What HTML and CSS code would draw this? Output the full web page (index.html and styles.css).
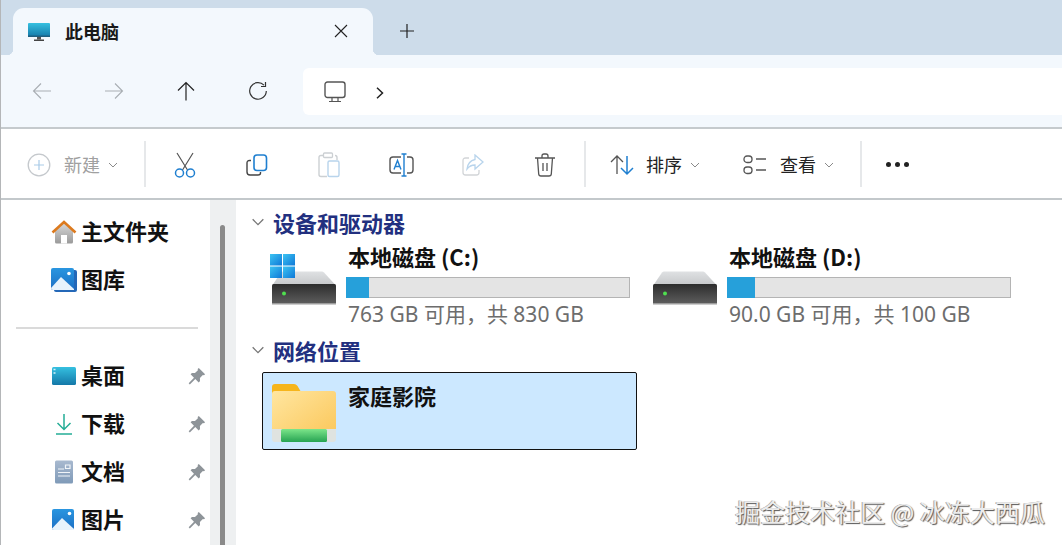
FILE: index.html
```html
<!DOCTYPE html>
<html lang="zh-CN">
<head>
<meta charset="utf-8">
<title>此电脑</title>
<link rel="stylesheet" href="styles.css">
</head>
<body>
<svg class="defs" width="0" height="0" aria-hidden="true">
  <defs>
    <linearGradient id="gMon" x1="0" y1="0" x2="0" y2="1"><stop offset="0" stop-color="#35c0e0"/><stop offset="1" stop-color="#1478a8"/></linearGradient>
    <linearGradient id="gPic" x1="0" y1="0" x2="0" y2="1"><stop offset="0" stop-color="#2a96e0"/><stop offset="1" stop-color="#1c6fc4"/></linearGradient>
    <linearGradient id="gHouse" x1="0" y1="0" x2="0" y2="1"><stop offset="0" stop-color="#d8d8d8"/><stop offset="1" stop-color="#9a9a9a"/></linearGradient>
    <linearGradient id="gDoc" x1="0" y1="0" x2="0" y2="1"><stop offset="0" stop-color="#a8b9cf"/><stop offset="1" stop-color="#7f9ab8"/></linearGradient>
    <linearGradient id="gDrive" x1="0" y1="0" x2="0" y2="1"><stop offset="0" stop-color="#2c2c2c"/><stop offset="1" stop-color="#5e5e5e"/></linearGradient>
    <linearGradient id="gDriveTop" x1="0" y1="0" x2="0" y2="1"><stop offset="0" stop-color="#dfe1e3"/><stop offset="1" stop-color="#c6c8ca"/></linearGradient>
    <linearGradient id="gFolder" x1="0" y1="0" x2="1" y2="1"><stop offset="0" stop-color="#ffe6a0"/><stop offset="1" stop-color="#fbc658"/></linearGradient>
    <linearGradient id="gGreen" x1="0" y1="0" x2="0" y2="1"><stop offset="0" stop-color="#7ce58a"/><stop offset="1" stop-color="#26a352"/></linearGradient>
    <linearGradient id="gWin" x1="0" y1="0" x2="1" y2="1"><stop offset="0" stop-color="#3cc4f2"/><stop offset="1" stop-color="#0f78d8"/></linearGradient>
    <symbol id="chev" viewBox="0 0 10 6"><path d="M1 1l4 4 4-4" fill="none" stroke="currentColor" stroke-width="1"/></symbol>
    <symbol id="pin" viewBox="0 0 16 16"><path d="M9.600 .8l5.600 5.600-1 1-1-.2-2.600 2.600.1 2.700-1.200 1.200-3-3L1.600 15.500l-1-1 4.700-5-3-3 1.200-1.200 2.700.1L8.800 2.800l-.2-1z" fill="#8e9499"/></symbol>
    <symbol id="drive" viewBox="0 0 64 34">
      <path d="M11 .5h39q1 0 2 1l11.500 12.500H.5L9 1.500q1-1 2-1z" fill="url(#gDriveTop)"/>
      <rect x="0" y="13" width="64" height="20" rx="1.500" fill="url(#gDrive)"/>
      <rect x="0" y="32" width="64" height="1.500" fill="#9c9c9c"/>
      <circle cx="12" cy="22.500" r="2" fill="#4fe04f"/>
    </symbol>
  </defs>
</svg>

<div class="window">
  <header class="tabstrip">
    <div class="tab">
      <svg class="tab-icon" width="24" height="20" viewBox="0 0 24 20"><rect x="1" y="1" width="22" height="14" rx="1" fill="url(#gMon)"/><rect x="1" y="13.500" width="22" height="1.500" fill="#1f5f80"/><rect x="10" y="15" width="4" height="2.500" fill="#555"/><rect x="7" y="17.500" width="10" height="1.500" fill="#444"/></svg>
      <span class="tab-title">此电脑</span>
      <svg class="tab-close" width="14" height="14" viewBox="0 0 14 14"><path d="M1 1l12 12M13 1L1 13" stroke="#222" stroke-width="1.100" fill="none"/></svg>
    </div>
    <svg class="tab-add" width="16" height="16" viewBox="0 0 16 16"><path d="M8 1v14M1 8h14" stroke="#222" stroke-width="1.200" fill="none"/></svg>
  </header>

  <nav class="navbar">
    <button class="nav-btn"><svg width="20" height="18" viewBox="0 0 20 18"><path d="M19 9H1.500M9 1.500L1.500 9 9 16.500" fill="none" stroke="#a9aeb3" stroke-width="1.100"/></svg></button>
    <button class="nav-btn"><svg width="20" height="18" viewBox="0 0 20 18"><path d="M1 9h17.500M11 1.500L18.500 9 11 16.500" fill="none" stroke="#a9aeb3" stroke-width="1.100"/></svg></button>
    <button class="nav-btn"><svg width="18" height="20" viewBox="0 0 18 20"><path d="M9 19.500V1.500M1 9.500l8-8 8 8" fill="none" stroke="#222" stroke-width="1.200"/></svg></button>
    <button class="nav-btn"><svg width="20" height="20" viewBox="0 0 20 20"><path d="M16 4.200A8.300 8.300 0 1 0 18.300 10" fill="none" stroke="#333" stroke-width="1.200"/><path d="M17.500 1v4.500H13" fill="none" stroke="#333" stroke-width="1.200"/></svg></button>
    <div class="address">
      <svg width="22" height="22" viewBox="0 0 22 22"><rect x="1" y="1" width="20" height="15.500" rx="2.500" fill="none" stroke="#555" stroke-width="1.400"/><path d="M8 16.500v3.500M14 16.500v3.500M5 20.500h12" stroke="#555" stroke-width="1.200" fill="none"/></svg>
      <svg class="addr-chev" width="8" height="12" viewBox="0 0 8 12"><path d="M1 .8L6.500 6 1 11.200" fill="none" stroke="#222" stroke-width="1.500"/></svg>
    </div>
  </nav>

  <div class="toolbar">
    <div class="tool-text tool-new is-off">
      <svg width="24" height="24" viewBox="0 0 24 24"><circle cx="12" cy="12" r="10.800" fill="none" stroke="#c4c8cc" stroke-width="1.300"/><path d="M12 7v10M7 12h10" stroke="#a9cbe8" stroke-width="1.200"/></svg>
      <span>新建</span>
      <svg class="chev" width="10" height="6"><use href="#chev"/></svg>
    </div>
    <i class="sep"></i>
    <button class="tool-btn"><svg width="22" height="26" viewBox="0 0 22 26"><path d="M3 1l10.500 17M19 1L8.500 18" stroke="#555" stroke-width="1.200" fill="none"/><circle cx="5.500" cy="21" r="4" fill="none" stroke="#1f7fd0" stroke-width="1.500"/><circle cx="16.500" cy="21" r="4" fill="none" stroke="#1f7fd0" stroke-width="1.500"/></svg></button>
    <button class="tool-btn"><svg width="22" height="22" viewBox="0 0 22 22"><path d="M5 6.500H3.500Q1 6.500 1 9v9q0 3 3 3h8q2.500 0 2.500-2V18" fill="none" stroke="#444" stroke-width="1.400"/><rect x="8" y="1" width="12.500" height="15.500" rx="3" fill="none" stroke="#1f7fd0" stroke-width="1.600"/></svg></button>
    <button class="tool-btn"><svg width="22" height="26" viewBox="0 0 22 26"><path d="M5 3.500H3Q1 3.500 1 5.500v17Q1 24.500 3 24.500H9M17 3.500h0q2 0 2 2V8" fill="none" stroke="#ccd0d3" stroke-width="1.400"/><rect x="5.500" y="1" width="9" height="4.500" rx="1" fill="none" stroke="#ccd0d3" stroke-width="1.300"/><rect x="10" y="9" width="11" height="15.500" rx="1.500" fill="none" stroke="#b8d4ec" stroke-width="1.400"/></svg></button>
    <button class="tool-btn"><svg width="25" height="24" viewBox="0 0 25 24"><path d="M12 4H4Q1 4 1 7v10q0 3 3 3h8M18 4h3q3 0 3 3v10q0 3-3 3h-3" fill="none" stroke="#555" stroke-width="1.400"/><path d="M12.500 1h5M15 1v22M12.500 23h5" fill="none" stroke="#1f7fd0" stroke-width="1.400"/><path d="M5 16.500L8.500 7.500 12 16.500M6.200 13.500h4.600" fill="none" stroke="#1f7fd0" stroke-width="1.400"/></svg></button>
    <button class="tool-btn"><svg width="22" height="22" viewBox="0 0 22 22"><path d="M7 4H3.500Q1 4 1 6.500v12Q1 21 3.500 21h11q2.500 0 2.500-2.500V16" fill="none" stroke="#d2d5d8" stroke-width="1.300"/><path d="M13 1l8 7-8 7v-4q-5 0-8 4 1-8 8-9.500z" fill="none" stroke="#b8d4ec" stroke-width="1.300"/></svg></button>
    <button class="tool-btn"><svg width="22" height="24" viewBox="0 0 22 24"><path d="M1 5h20M8 5V3q0-2 2-2h2q2 0 2 2v2M3.500 5l1.200 16q.2 2 2.300 2h8q2.100 0 2.300-2L18.500 5M9 10v8M13 10v8" fill="none" stroke="#555" stroke-width="1.300"/></svg></button>
    <i class="sep"></i>
    <div class="tool-text tool-sort">
      <svg width="26" height="22" viewBox="0 0 26 22"><path d="M7 20V2M1 8l6-6 6 6" fill="none" stroke="#555" stroke-width="1.300"/><path d="M17 2v18M11 14l6 6 6-6" fill="none" stroke="#1f7fd0" stroke-width="1.500"/></svg>
      <span>排序</span>
      <svg class="chev" width="10" height="6"><use href="#chev"/></svg>
    </div>
    <div class="tool-text tool-view">
      <svg width="24" height="20" viewBox="0 0 24 20"><rect x="1" y="1" width="8" height="6.500" rx="3" fill="none" stroke="#555" stroke-width="1.300"/><rect x="1" y="12" width="8" height="6.500" rx="3" fill="none" stroke="#555" stroke-width="1.300"/><path d="M13 4h10M13 15h10" stroke="#555" stroke-width="1.300"/></svg>
      <span>查看</span>
      <svg class="chev" width="10" height="6"><use href="#chev"/></svg>
    </div>
    <i class="sep sep-last"></i>
    <div class="more"><b></b><b></b><b></b></div>
  </div>

  <div class="content">
    <aside class="sidebar">
      <ul class="side-list">
        <li class="side-row">
          <svg width="26" height="24" viewBox="0 0 26 24"><path d="M4 11L13 3l9 8v11q0 1.500-1.500 1.500H5.500Q4 23.500 4 22z" fill="url(#gHouse)"/><rect x="10" y="15" width="6" height="8.500" fill="#fff"/><path d="M1.500 12.500L13 2l11.500 10.500" fill="none" stroke="#dc7a1e" stroke-width="2.600"/></svg>
          <span>主文件夹</span>
        </li>
        <li class="side-row">
          <svg width="26" height="24" viewBox="0 0 26 24"><rect x="3" y="2" width="23" height="22" rx="2" fill="#2468b8"/><rect x="0" y="0" width="23" height="22" rx="2" fill="url(#gPic)"/><path d="M0 20l10-11 13 12v1H2q-2 0-2-2z" fill="#e8f3fc"/><circle cx="18" cy="5.500" r="1.800" fill="#fff"/></svg>
          <span>图库</span>
        </li>
        <li class="side-divider"><i></i></li>
        <li class="side-row">
          <svg width="26" height="20" viewBox="0 0 26 20"><rect width="24" height="18" y="1" x="1" rx="1.500" fill="url(#gMon)"/><path d="M2.500 3.500h2M2.500 7h2" stroke="#d5f2fa" stroke-width="1.500"/></svg>
          <span>桌面</span>
          <svg class="pin" width="18" height="18"><use href="#pin"/></svg>
        </li>
        <li class="side-row">
          <svg width="26" height="22" viewBox="0 0 26 22"><path d="M13 1v15M6.500 10l6.500 6.500 6.500-6.500M5 21h16" fill="none" stroke="#25ad96" stroke-width="1.500"/></svg>
          <span>下载</span>
          <svg class="pin" width="18" height="18"><use href="#pin"/></svg>
        </li>
        <li class="side-row">
          <svg width="26" height="24" viewBox="0 0 26 24"><rect x="4" y="0.500" width="18" height="23" rx="1.500" fill="url(#gDoc)"/><path d="M14.500 5h4.500v3.500h-4.500zM7 9h6M7 12.500h12M7 16h12" fill="none" stroke="#f0f4f8" stroke-width="1.200"/></svg>
          <span>文档</span>
          <svg class="pin" width="18" height="18"><use href="#pin"/></svg>
        </li>
        <li class="side-row">
          <svg width="26" height="22" viewBox="0 0 26 22"><rect x="1" y="0" width="22" height="21" rx="2" fill="url(#gPic)"/><path d="M1 19.500L11 9l12 11v1H3q-2 0-2-1.500z" fill="#e8f3fc"/><circle cx="18.500" cy="4.500" r="1.800" fill="#fff"/></svg>
          <span>图片</span>
          <svg class="pin" width="18" height="18"><use href="#pin"/></svg>
        </li>
      </ul>
    </aside>
    <div class="scrolltrack"><div class="scrollthumb"></div></div>

    <main class="main">
      <section>
        <h2 class="group-head"><svg width="14" height="8" viewBox="0 0 10 6"><use href="#chev"/></svg>设备和驱动器</h2>
        <div class="drives">
          <article class="drive">
            <div class="drive-icon">
              <svg class="winlogo" width="25" height="24" viewBox="0 0 25 24"><rect width="12" height="11.500" fill="url(#gWin)"/><rect x="13" width="12" height="11.500" fill="url(#gWin)"/><rect y="12.500" width="12" height="11.500" fill="url(#gWin)"/><rect x="13" y="12.500" width="12" height="11.500" fill="url(#gWin)"/></svg>
              <svg class="hdd" width="64" height="34"><use href="#drive"/></svg>
            </div>
            <div class="drive-info">
              <div class="item-name">本地磁盘 (C:)</div>
              <div class="meter"><div class="meter-fill" style="width:8.100%"></div></div>
              <div class="drive-sub">763 GB 可用，共 830 GB</div>
            </div>
          </article>
          <article class="drive">
            <div class="drive-icon">
              <svg class="hdd" width="64" height="34"><use href="#drive"/></svg>
            </div>
            <div class="drive-info">
              <div class="item-name">本地磁盘 (D:)</div>
              <div class="meter"><div class="meter-fill" style="width:10%"></div></div>
              <div class="drive-sub">90.0 GB 可用，共 100 GB</div>
            </div>
          </article>
        </div>
      </section>
      <section>
        <h2 class="group-head"><svg width="14" height="8" viewBox="0 0 10 6"><use href="#chev"/></svg>网络位置</h2>
        <article class="net-item">
          <svg width="64" height="58" viewBox="0 0 64 58"><path d="M0 3q0-3 3-3h19q2 0 3.500 2L29 8v4H0z" fill="#f6b51c"/><path d="M0 10q0-3 3-3h58q3 0 3 3v44H0z" fill="url(#gFolder)"/><path d="M0 45h64v10q0 3-3 3H3q-3 0-3-3z" fill="#dfe3e0"/><rect x="9" y="45" width="46" height="13" rx="1.500" fill="url(#gGreen)"/></svg>
          <div class="item-name">家庭影院</div>
        </article>
      </section>
    </main>
  </div>

  <div class="watermark">掘金技术社区 @ 冰冻大西瓜</div>
</div>
</body>
</html>
```

FILE: styles.css
```css
* { box-sizing: border-box; margin: 0; padding: 0; }
html, body { width: 100%; height: 100%; overflow: hidden; background: #fff; }
body { font-family: "Noto Sans CJK SC", "Noto Sans", sans-serif; color: #111; }
.defs { position: absolute; }
svg { display: block; flex: none; }
button { background: none; border: 0; display: flex; align-items: center; justify-content: center; }

.window { position: relative; width: 1062px; height: 545px; display: flex; flex-direction: column; border-left: 1px solid #b4b6b8; overflow: hidden; }

/* tab strip */
.tabstrip { height: 55px; flex: none; background: #cddcea; padding: 8px 0 0 12px; display: flex; align-items: stretch; }
.tab { position: relative; width: 360px; background: #f3f8fd; border-radius: 11px 11px 0 0; display: flex; align-items: center; padding: 0 0 0 14px; }
.tab::before, .tab::after { content: ""; position: absolute; bottom: 0; width: 6px; height: 6px; }
.tab::before { left: -6px; background: radial-gradient(circle at 0 0, #cddcea 6px, #f3f8fd 6.500px); }
.tab::after { right: -6px; background: radial-gradient(circle at 100% 0, #cddcea 6px, #f3f8fd 6.500px); }
.tab-title { margin-left: 14px; padding-bottom: 2px; font-size: 18px; font-weight: 700; color: #1a1a1a; width: 214px; }
.tab-close { margin-left: 55px; margin-top: -1px; }
.tab-add { margin: 15px 0 0 26px; }

/* navigation */
.navbar { height: 74px; flex: none; background: #f3f8fd; border-bottom: 2px solid #c5cacd; display: flex; align-items: center; padding: 0 0 0 5px; }
.nav-btn { width: 72px; height: 46px; }
.address { margin-left: 9px; flex: 1; height: 47px; margin-top: 1px; background: #fff; border-radius: 6px 0 0 6px; display: flex; align-items: center; padding-left: 21px; }
.addr-chev { margin-left: 30px; margin-top: 2px; }

/* command bar */
.toolbar { height: 71px; flex: none; background: #fff; border-bottom: 2px solid #c3c8cb; display: flex; align-items: center; }
.tool-text { display: flex; align-items: center; font-size: 18px; color: #222; padding-top: 2px; }
.tool-text span { padding-bottom: 2px; }
.tool-new { padding-left: 26px; width: 143px; }
.tool-new span { margin-left: 13px; }
.is-off { color: #a0a0a0; }
.chev { color: #8a8a8a; margin-left: 8px; }
.sep { display: block; width: 2px; height: 46px; background: #e6e8ea; flex: none; }
.tool-btn { width: 72px; height: 46px; flex: none; padding-top: 2px; }
.sep + .tool-btn { margin-left: 3px; }
.tool-btn + .sep { margin-left: 3px; }
.tool-sort { margin-left: 24px; }
.tool-sort span { margin-left: 10px; }
.tool-view { margin-left: 43px; }
.tool-view span { margin-left: 13px; }
.sep-last { margin-left: 26px; }
.more { display: flex; gap: 4px; margin-left: 24px; padding-top: 2px; }
.more b { width: 5px; height: 5px; border-radius: 50%; background: #222; }

/* body */
.content { flex: 1; display: flex; min-height: 0; }
.sidebar { width: 209px; flex: none; padding-top: 8px; }
.side-list { list-style: none; }
.side-row { height: 48px; display: flex; align-items: center; padding: 0 4px 0 50px; font-size: 22px; font-weight: 700; color: #111; }
.side-row span { margin-left: 4px; flex: 1; padding-bottom: 4px; }
.side-divider { height: 48px; display: flex; align-items: center; padding-left: 15px; }
.side-divider i { display: block; width: 182px; height: 2px; background: #dadada; }
.scrolltrack { width: 26px; flex: none; background: #eef0f1; padding: 25px 0 0 10px; }
.scrollthumb { width: 5px; height: 100%; background: #8a8a8a; border-radius: 3px 3px 0 0; }

.main { flex: 1; padding: 8px 0 0 15px; min-width: 0; }
.group-head { height: 32px; display: flex; align-items: center; padding-bottom: 4px; font-size: 22px; font-weight: 700; color: #22307f; }
.group-head svg { color: #777; margin-right: 8px; }
.drives { display: flex; height: 96px; }
.drive { position: relative; width: 381px; padding-left: 21px; display: flex; }
.drive-icon { width: 64px; margin-right: 10px; padding-top: 31px; flex: none; }
.winlogo { position: absolute; left: 19px; top: 14px; z-index: 1; }
.drive-info { width: 284px; }
.item-name { font-size: 22px; font-weight: 700; line-height: 32px; color: #111; }
.drive .item-name { padding-left: 2px; }
.meter { height: 21px; margin-top: 5px; background: #e4e4e4; border: 1px solid #b4b4b4; }
.meter-fill { height: 100%; background: #26a0da; margin: -1px 0 0 -1px; box-sizing: content-box; padding-bottom: 2px; }
.drive-sub { font-family: "Noto Sans", "Noto Sans CJK SC", sans-serif; font-size: 21px; line-height: 30px; margin-top: 1px; padding-left: 2px; color: #6d6d6d; white-space: nowrap; }
.net-item { margin: 4px 0 0 11px; width: 375px; height: 78px; background: #cce8ff; border: 1px solid #111; border-radius: 2px; display: flex; padding: 11px 0 0 9px; }
.net-item .item-name { margin: 0 0 0 12px; line-height: 22px; }

.watermark { position: absolute; right: 17px; bottom: 16px; font-size: 25px; line-height: 36px; color: #ececec; text-shadow: 1px 1px 1px #555, -1px 0 0 #aaa; white-space: nowrap; }
```
